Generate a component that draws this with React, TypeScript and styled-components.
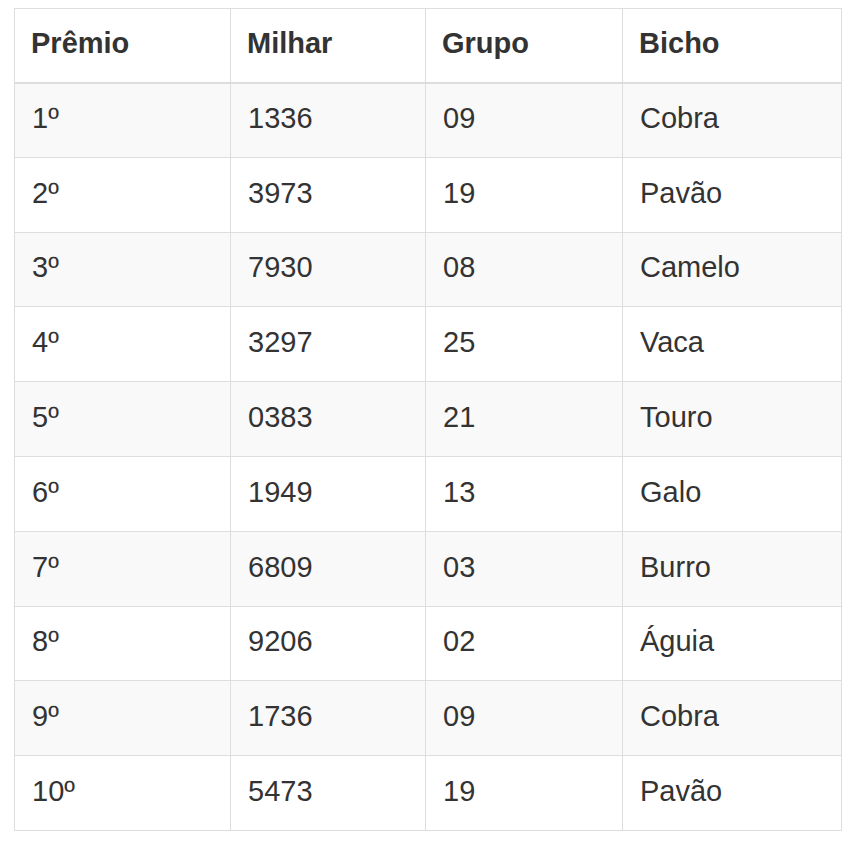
import React from "react";
import styled, { createGlobalStyle } from "styled-components";

const Global = createGlobalStyle`
  html, body { margin: 0; padding: 0; background: #fff; }
  body { font-family: "Liberation Sans", Arial, sans-serif; }
`;

const Wrap = styled.div`
  padding: 8px 15px 0 14px;
`;

const Table = styled.table`
  width: 827px;
  border-collapse: collapse;
  table-layout: fixed;
  border: 1px solid #ddd;
  font-size: 29px;
  line-height: 41px;
  color: #333;
`;

const HeadCell = styled.th`
  text-align: left;
  font-weight: bold;
  height: 74px;
  padding: 0 16px 3px;
  vertical-align: middle;
  border: 1px solid #ddd;
  border-bottom: 2px solid #ddd;
  box-sizing: border-box;
`;

const Row = styled.tr<{ $striped: boolean }>`
  background: ${(p) => (p.$striped ? "#f9f9f9" : "#fff")};
`;

const Cell = styled.td`
  height: 74.8px;
  padding: 0 16px 3px 17px;
  vertical-align: middle;
  border: 1px solid #ddd;
  box-sizing: border-box;
`;

const rows = [
  ["1º", "1336", "09", "Cobra"],
  ["2º", "3973", "19", "Pavão"],
  ["3º", "7930", "08", "Camelo"],
  ["4º", "3297", "25", "Vaca"],
  ["5º", "0383", "21", "Touro"],
  ["6º", "1949", "13", "Galo"],
  ["7º", "6809", "03", "Burro"],
  ["8º", "9206", "02", "Águia"],
  ["9º", "1736", "09", "Cobra"],
  ["10º", "5473", "19", "Pavão"],
];

export default function App() {
  return (
    <Wrap>
      <Global />
      <Table>
        <colgroup>
          <col style={{ width: 216 }} />
          <col style={{ width: 195 }} />
          <col style={{ width: 197 }} />
          <col style={{ width: 219 }} />
        </colgroup>
        <thead>
          <tr>
            <HeadCell>Prêmio</HeadCell>
            <HeadCell>Milhar</HeadCell>
            <HeadCell>Grupo</HeadCell>
            <HeadCell>Bicho</HeadCell>
          </tr>
        </thead>
        <tbody>
          {rows.map((r, i) => (
            <Row key={i} $striped={i % 2 === 0}>
              {r.map((c, j) => (
                <Cell key={j}>{c}</Cell>
              ))}
            </Row>
          ))}
        </tbody>
      </Table>
    </Wrap>
  );
}
